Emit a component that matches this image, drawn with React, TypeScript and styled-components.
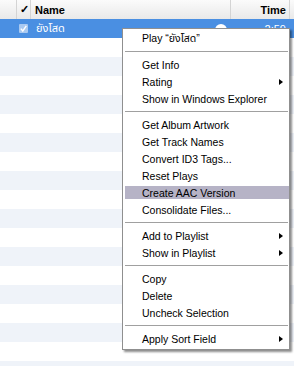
import React from 'react';
import styled, { createGlobalStyle, css } from 'styled-components';

const FONT = `"Liberation Sans", "Noto Sans Thai", "Noto Sans", sans-serif`;

const GlobalStyle = createGlobalStyle`
  html, body {
    margin: 0;
    padding: 0;
    background: #ffffff;
    overflow: hidden;
  }
`;

const Page = styled.div`
  position: relative;
  width: 294px;
  height: 366px;
  overflow: hidden;
  font-family: ${FONT};
  font-size: 11px;
  background: #ffffff;
`;

const Header = styled.div`
  display: grid;
  grid-template-columns: 17px 14px 200px 59px 1fr;
  height: 19px;
  background: linear-gradient(#fbfbfb, #e9e9e9);
  box-sizing: border-box;
`;

const HeaderCell = styled.div<{ $align?: 'left' | 'right' | 'center' }>`
  display: flex;
  align-items: center;
  justify-content: ${(p) =>
    p.$align === 'right' ? 'flex-end' : p.$align === 'center' ? 'center' : 'flex-start'};
  border-right: 1px solid #d4d4d4;
  padding: 0 3px 0 4px;
  font-weight: bold;
  font-size: 11px;
  color: #000;
  box-sizing: border-box;
  overflow: hidden;
  white-space: nowrap;

  &:last-child {
    border-right: none;
  }
`;

const CheckHeader = styled(HeaderCell)`
  padding: 0 0 0 3px;
`;

const Row = styled.div<{ $stripe?: boolean; $selected?: boolean }>`
  display: grid;
  grid-template-columns: 17px 14px 200px 59px 1fr;
  height: 19px;
  align-items: center;
  background: ${(p) => (p.$selected ? '#4a8fe2' : p.$stripe ? '#eff3f9' : '#ffffff')};
  color: ${(p) => (p.$selected ? '#ffffff' : '#000000')};
`;

const Cell = styled.div<{ $align?: 'left' | 'right' }>`
  display: flex;
  align-items: center;
  justify-content: ${(p) => (p.$align === 'right' ? 'flex-end' : 'flex-start')};
  padding: 0 4px 0 5px;
  white-space: nowrap;
  overflow: hidden;
`;

const NameCell = styled(Cell)`
  justify-content: space-between;
  padding-right: 4px;
`;

const CheckCell = styled(Cell)`
  padding: 0 0 0 2px;
`;

const CheckBox = styled.span`
  display: inline-flex;
  align-items: center;
  justify-content: center;
  width: 9px;
  height: 9px;
  background: #a9c9f1;
  border-radius: 1px;
`;

const LinkDot = styled.span`
  width: 12px;
  height: 12px;
  border-radius: 50%;
  background: #ffffff;
  margin-top: 3px;
`;

const Menu = styled.div`
  position: absolute;
  left: 122px;
  top: 28px;
  width: 168px;
  box-sizing: border-box;
  background: #ffffff;
  border: 1px solid #8f8f8f;
  box-shadow: 2px 2px 2px rgba(0, 0, 0, 0.45);
  padding: 1px 0 2px;
  z-index: 2;
`;

const Item = styled.div`
  height: 17px;
  box-sizing: border-box;
  padding: 2px 0 2px 2px;
`;

const ItemBody = styled.div<{ $active?: boolean }>`
  display: flex;
  align-items: center;
  justify-content: space-between;
  height: 13px;
  padding: 0 6px 0 17px;
  color: #000;
  font-size: 10.5px;
  white-space: nowrap;
  ${(p) =>
    p.$active &&
    css`
      background: #b6b3c6;
    `}
`;

const Arrow = styled.span`
  width: 0;
  height: 0;
  border-top: 3.5px solid transparent;
  border-bottom: 3.5px solid transparent;
  border-left: 4px solid #000;
`;

const Separator = styled.div`
  height: 9px;
  box-sizing: border-box;
  padding-top: 4px;
  margin: 0 1px 0 2px;

  &::after {
    content: '';
    display: block;
    height: 1px;
    background: #a0a0a0;
  }
`;

type Entry = { label: string; sub?: boolean; active?: boolean } | 'sep';

const entries: Entry[] = [
  { label: 'Play \u201Cยังโสด\u201D' },
  'sep',
  { label: 'Get Info' },
  { label: 'Rating', sub: true },
  { label: 'Show in Windows Explorer' },
  'sep',
  { label: 'Get Album Artwork' },
  { label: 'Get Track Names' },
  { label: 'Convert ID3 Tags...' },
  { label: 'Reset Plays' },
  { label: 'Create AAC Version', active: true },
  { label: 'Consolidate Files...' },
  'sep',
  { label: 'Add to Playlist', sub: true },
  { label: 'Show in Playlist', sub: true },
  'sep',
  { label: 'Copy' },
  { label: 'Delete' },
  { label: 'Uncheck Selection' },
  'sep',
  { label: 'Apply Sort Field', sub: true },
];

function CheckMark() {
  return (
    <svg width="7" height="7" viewBox="0 0 7 7">
      <path d="M0.8 3.6 L2.8 6 L6.3 0.8" stroke="#fff" strokeWidth="1.4" fill="none" />
    </svg>
  );
}

export default function App() {
  const emptyRows = Array.from({ length: 18 }, (_, i) => i);

  return (
    <Page>
      <GlobalStyle />
      <Header>
        <HeaderCell />
        <CheckHeader>✓</CheckHeader>
        <HeaderCell>Name</HeaderCell>
        <HeaderCell $align="right">Time</HeaderCell>
        <HeaderCell />
      </Header>

      <Row $selected>
        <Cell />
        <CheckCell>
          <CheckBox>
            <CheckMark />
          </CheckBox>
        </CheckCell>
        <NameCell>
          <span>ยังโสด</span>
          <LinkDot />
        </NameCell>
        <Cell $align="right">2:59</Cell>
        <Cell />
      </Row>

      {emptyRows.map((i) => (
        <Row key={i} $stripe={i % 2 === 1} />
      ))}

      <Menu>
        {entries.map((e, i) =>
          e === 'sep' ? (
            <Separator key={i} />
          ) : (
            <Item key={i}>
              <ItemBody $active={e.active}>
                <span>{e.label}</span>
                {e.sub && <Arrow />}
              </ItemBody>
            </Item>
          )
        )}
      </Menu>
    </Page>
  );
}
